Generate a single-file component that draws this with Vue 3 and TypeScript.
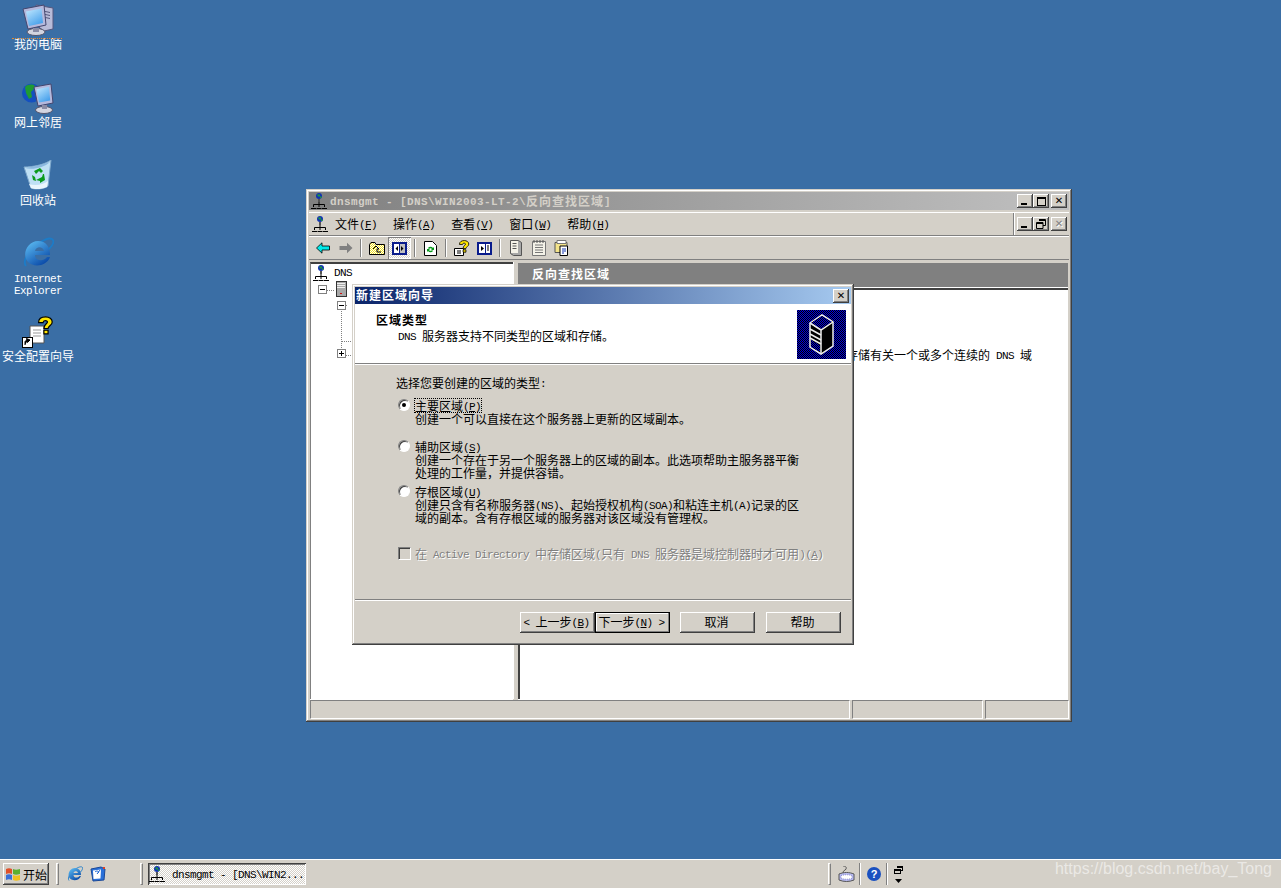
<template>
  <div class="screen">
    <svg class="defs" width="0" height="0" aria-hidden="true">
      <symbol id="mmc" viewBox="0 0 16 16">
        <circle cx="8" cy="3" r="3" fill="#1034b0" />
        <path d="M6 1.500h3v2H7zM9 3.500h1.500V5H9z" fill="#1e9a3c" />
        <path d="M7 6h2v3H7z" fill="#555" />
        <path d="M8 9v2M2.500 14v-2.500h11V14M8 11.500V14" fill="none" stroke="#000" />
        <path d="M0 15.500h5M5.500 15.500h5M11 15.500h5" stroke="#000" />
      </symbol>
      <symbol id="ie" viewBox="0 0 32 32">
        <defs>
          <linearGradient id="ieg" x1="0" y1="0" x2="0.7" y2="1">
            <stop offset="0" stop-color="#62c4f8" />
            <stop offset="1" stop-color="#0a4aa8" />
          </linearGradient>
        </defs>
        <path d="M4 29C0 24 7 12 17 6c6-4 12-6 14-3 1 2-1 6-4 9" fill="none" stroke="#1c7cc8" stroke-width="1.800" />
        <path d="M16 4c8 0 12 6 12 14H13c0 6 8 7 12 2h3c-3 9-16 11-22 5C-1 17 6 4 16 4zm-3 10h9c-1-5-8-5-9 0z" fill="url(#ieg)" fill-rule="evenodd" />
      </symbol>
      <symbol id="qmark" viewBox="0 0 16 16">
        <path d="M3 5.500C3 2 6 .7 9 .7s5.500 1.800 5.500 4.300c0 3-3.500 3.300-3.500 5.500H7.500C7.500 7 10.500 6.500 10.500 5 10.500 3.600 7 3.200 6.800 5.500z" fill="#ffe600" stroke="#000" stroke-width="1" />
        <path d="M7.500 12h3.500v3H7.500z" fill="#ffe600" stroke="#000" stroke-width="1" />
      </symbol>
      <linearGradient id="scr" x1="0" y1="0" x2="0.6" y2="1">
        <stop offset="0" stop-color="#c4eaff" />
        <stop offset="1" stop-color="#4aa2ec" />
      </linearGradient>
      <pattern id="ydith" width="2" height="2" patternUnits="userSpaceOnUse">
        <rect width="2" height="2" fill="#fff" />
        <rect width="1" height="1" fill="#f0e020" />
        <rect x="1" y="1" width="1" height="1" fill="#f0e020" />
      </pattern>
    </svg>

    <main class="desktop">
      <div
        v-for="item in desktopIcons"
        :key="item.id"
        class="desk-icon"
        :style="{ top: item.top + 'px' }"
      >
        <svg v-if="item.id === 'pc'" class="desk-svg" viewBox="0 0 32 32">
          <path d="M14 1 31 4v21l-9 2-8-6z" fill="#b8bbd8" stroke="#55577e" />
          <path d="M21 7l7 1.500M21 10l7 1.500M21 13l7 1.500" stroke="#55577e" />
          <ellipse cx="14" cy="28" rx="9" ry="3.500" fill="#d4d5e0" stroke="#55566c" />
          <path d="M1 5 22 1l2 20-18 4z" fill="#b4b8dc" stroke="#44466e" />
          <path d="M4 7.500 19.500 4.500l1.500 14.500L7 22z" fill="url(#scr)" />
          <path d="M11 24h6v4h-6z" fill="#8a8ca6" />
        </svg>
        <svg v-else-if="item.id === 'net'" class="desk-svg" viewBox="0 0 32 32">
          <circle cx="9.500" cy="11" r="9.500" fill="#1450c0" />
          <path d="M3 5c3-3 8-3 10-1l-2 4-2 2 1 5-3 2-3-6z" fill="#1f9a34" />
          <path d="M12 5 29 2l2 19-15 3z" fill="#b4b8dc" stroke="#44466e" />
          <path d="M14.500 7.200 27 4.800l1.200 13.700L17 20.500z" fill="url(#scr)" />
          <ellipse cx="22" cy="28" rx="8.500" ry="3.500" fill="#d4d5e0" stroke="#55566c" />
          <path d="M20 23h5v4h-5z" fill="#8a8ca6" />
        </svg>
        <svg v-else-if="item.id === 'bin'" class="desk-svg" viewBox="0 0 32 32">
          <path d="M2 7C10 7 22 5 29 0l-3 26c-3 3-13 4-17 2z" fill="#bfe0f5" stroke="#7ea8cc" />
          <path d="M3 8c7 2 19 0 25-6-7 2-17 5-25 6z" fill="#8ab8df" />
          <path d="M7 24c6 2 14 1 19-3l-1 6c-4 2-12 3-16 1z" fill="#eaf6fd" />
          <path d="M12 11l6-3 3 3-2 2-2-2-3 3zM22 14l1 6-5 3v-2l-4-1 6-3 1-3zM10 15l3 2 1 4-3-1z" fill="#0a9a1c" />
        </svg>
        <svg v-else-if="item.id === 'ie'" class="desk-svg"><use href="#ie" /></svg>
        <svg v-else class="desk-svg" viewBox="0 0 32 32">
          <path d="M8 10h14v17H8z" fill="#fff" stroke="#555" />
          <path d="M11 14h8M11 17h8M11 20h8" stroke="#999" />
          <use href="#qmark" x="13" y="0" width="19" height="19" />
          <path d="M0 21h11v11H0z" fill="#000" />
          <path d="M1 22h9v9H1z" fill="#fff" />
          <path d="M3 29v-3c0-1 1-2 3-2M4.500 22.500 8 24l-2.500 2.500z" fill="#000" stroke="#000" />
        </svg>
        <div class="desk-label" :class="{ 'latin-label': item.latin }">
          <span v-for="line in item.lines" :key="line" :class="{ l: item.latin }">{{ line }}</span>
        </div>
      </div>
      <div class="drag-mark"></div>

      <section class="win">
        <header class="titlebar">
          <svg class="ico16"><use href="#mmc" /></svg>
          <span class="title-text bold"><span class="l">dnsmgmt - [DNS\WIN2003-LT-2\</span>反向查找区域<span class="l">]</span></span>
          <div class="caption-btns">
            <button class="cap"><span class="glyph-min"></span></button>
            <button class="cap"><span class="glyph-max"></span></button>
            <button class="cap close"><span class="glyph-x">✕</span></button>
          </div>
        </header>

        <nav class="menubar">
          <svg class="ico16 menu-ico"><use href="#mmc" /></svg>
          <span v-for="m in menus" :key="m.key" class="menu-item">{{ m.label }}<span class="l">(<u>{{ m.key }}</u>)</span></span>
          <div class="mdi-btns">
            <button class="cap"><span class="glyph-min"></span></button>
            <button class="cap">
              <svg width="10" height="10" viewBox="0 0 10 10"><path d="M3 .5h6.500v6H7M.5 3.500H7v6H.5zM3 1.500h6.500M.5 4.500H7" fill="none" stroke="#000" /></svg>
            </button>
            <button class="cap close disabled"><span class="glyph-x">✕</span></button>
          </div>
        </nav>

        <div class="toolbar">
          <span class="tool">
            <svg width="14" height="12" viewBox="0 0 14 12"><path d="M.5 6 6 .8V4h7.500v4H6v3.200z" fill="#00e8e8" stroke="#000" stroke-width=".8" /></svg>
          </span>
          <span class="tool">
            <svg width="14" height="12" viewBox="0 0 14 12"><path d="M13.500 6 8 .8V4H.5v4H8v3.200z" fill="#808080" /></svg>
          </span>
          <span class="tsep"></span>
          <span class="tool">
            <svg width="16" height="14" viewBox="0 0 16 14"><path d="M.5 3.500 2 1.500h4l1 2h8.500v10H.5z" fill="url(#ydith)" stroke="#000" /><path d="M4 8l3-3 3 3H8v3h4" fill="none" stroke="#000" /></svg>
          </span>
          <span class="tool pressed">
            <svg width="15" height="13" viewBox="0 0 15 13"><path d="M0 0h15v13H0z" fill="#0a1c8c" /><path d="M2 2h5v9H2z" fill="#fff" /><path d="M8 2h5v9H8z" fill="#c0c0c0" /><path d="M6 4v5L3.500 6.500zM9 4v5l2.500-2.500z" fill="#000" /></svg>
          </span>
          <span class="tsep"></span>
          <span class="tool">
            <svg width="13" height="15" viewBox="0 0 13 15"><path d="M.5.500h8l4 4v10H.5z" fill="#fff" stroke="#000" /><path d="M4 7a3 3 0 0 1 5 0l1-1v3H7l1-1a2 2 0 0 0-3 0zM9 10a3 3 0 0 1-5 0l-1 1V8h3l-1 1a2 2 0 0 0 3 0z" fill="#0a9a1c" /></svg>
          </span>
          <span class="tsep"></span>
          <span class="tool">
            <svg width="16" height="16" viewBox="0 0 16 16"><path d="M.5 8.500h9v7h-9z" fill="#fff" stroke="#000" /><path d="M3 11h4M3 13h4" stroke="#000" /><use href="#qmark" x="3" y="0" width="13" height="13" /></svg>
          </span>
          <span class="tool">
            <svg width="15" height="13" viewBox="0 0 15 13"><path d="M0 0h15v13H0z" fill="#0a1c8c" /><path d="M2 2h6v9H2z" fill="#fff" /><path d="M9 2h4v9H9z" fill="#fff" /><path d="M4 4v5l3-2.500z" fill="#000" /><path d="M10 4h2M10 6h2M10 8h2" stroke="#000" /></svg>
          </span>
          <span class="tsep"></span>
          <span class="tool">
            <svg width="12" height="16" viewBox="0 0 12 16"><path d="M.5.500h8l3 2v13h-8l-3-2z" fill="#a8a8a8" stroke="#555" /><path d="M1 1h7v12H1z" fill="#f4f2e8" /><path d="M2.500 3.500h4M2.500 6h4M2.500 8.500h4" stroke="#555" /></svg>
          </span>
          <span class="tool">
            <svg width="14" height="16" viewBox="0 0 14 16"><path d="M.5 1.500h13v14H.5z" fill="#f4f2e8" stroke="#777" /><path d="M3 5h8M3 7.500h8M3 10h8M3 12.500h8" stroke="#777" /><path d="M2 0v3M5 0v3M8 0v3M11 0v3" stroke="#555" /></svg>
          </span>
          <span class="tool">
            <svg width="16" height="16" viewBox="0 0 16 16"><path d="M1 2.500h12v10H1z" fill="#f4e48a" stroke="#555" /><path d="M3 .5h9v3H3z" fill="#fff" stroke="#777" /><path d="M6 6h7.500v9.500H6z" fill="#fff" stroke="#000" /><path d="M8 9h4M8 11h4M8 13h2" stroke="#1034b0" /></svg>
          </span>
        </div>

        <div class="panes">
          <aside class="tree">
            <div class="tree-root">
              <svg class="ico16"><use href="#mmc" /></svg>
              <span class="l">DNS</span>
            </div>
            <svg class="tree-lines" width="60" height="90" viewBox="0 0 60 90" shape-rendering="crispEdges">
              <path d="M12 9h12M30 22v51M31 60h10M31 24h5M35 74h6" fill="none" stroke="#808080" stroke-dasharray="1 1" />
              <path d="M7.500 4.500h8v8h-8zM26.500 20.500h8v8h-8zM26.500 68.500h8v8h-8z" fill="#fff" stroke="#808080" />
              <path d="M9 8.500h5M28 24.500h5M28 72.500h5M30.500 70v5" stroke="#000" />
              <path d="M25 0h10v15H25z" fill="#a8a8a8" stroke="#333" />
              <path d="M26 2h8M26 4h8M26 6h8" stroke="#eee" />
              <path d="M29 12h2v1h-2z" fill="#d01010" />
            </svg>
          </aside>
          <div class="splitter"></div>
          <div class="detail">
            <div class="detail-head bold">反向查找区域</div>
            <div class="detail-body">
              <p class="detail-text">存储有关一个或多个连续的<span class="l"> DNS </span>域</p>
            </div>
          </div>
        </div>

        <footer class="statusbar">
          <span class="st st-a"></span>
          <span class="st st-b"></span>
          <span class="st st-c"></span>
        </footer>
      </section>

      <section class="wizard">
        <header class="wiz-title bold">
          <span class="wiz-name">新建区域向导</span>
          <button class="cap close"><span class="glyph-x">✕</span></button>
        </header>
        <div class="wiz-head">
          <div>
            <h1 class="wiz-h1 bold">区域类型</h1>
            <p class="wiz-sub"><span class="l">DNS </span>服务器支持不同类型的区域和存储。</p>
          </div>
          <svg class="wiz-art" width="49" height="49" viewBox="0 0 49 49">
            <defs>
              <pattern id="dith" width="2" height="2" patternUnits="userSpaceOnUse">
                <rect width="2" height="2" fill="#000" />
                <rect width="1" height="1" fill="#0000e0" />
                <rect x="1" y="1" width="1" height="1" fill="#0000e0" />
              </pattern>
            </defs>
            <rect width="49" height="49" fill="url(#dith)" />
            <path d="M13 13 25 5l11 7v24l-12 8-11-7z" fill="#000" stroke="#eee" stroke-width="1.500" />
            <path d="M14 13l11-7 10 6-11 7z" fill="url(#dith)" />
            <path d="M13 13l11 7 12-8M24 20v24" fill="none" stroke="#eee" stroke-width="1.500" />
            <path d="M13 19l11 6M13 24l11 6M13 28l11 6" stroke="#eee" stroke-width="1.500" />
            <path d="M14 30l9 5v7l-9-5z" fill="url(#dith)" />
          </svg>
        </div>
        <div class="rule"></div>

        <div class="wiz-body">
          <p class="prompt">选择您要创建的区域的类型<span class="l">:</span></p>

          <div class="option first">
            <span class="radio checked"></span>
            <div>
              <div class="opt-label focus">主要区域<span class="l">(<u>P</u>)</span></div>
              <div>创建一个可以直接在这个服务器上更新的区域副本。</div>
            </div>
          </div>

          <div class="option second">
            <span class="radio"></span>
            <div>
              <div class="opt-label">辅助区域<span class="l">(<u>S</u>)</span></div>
              <div>创建一个存在于另一个服务器上的区域的副本。此选项帮助主服务器平衡</div>
              <div>处理的工作量，并提供容错。</div>
            </div>
          </div>

          <div class="option third">
            <span class="radio"></span>
            <div>
              <div class="opt-label">存根区域<span class="l">(<u>U</u>)</span></div>
              <div>创建只含有名称服务器<span class="l">(NS)</span>、起始授权机构<span class="l">(SOA)</span>和粘连主机<span class="l">(A)</span>记录的区</div>
              <div>域的副本。含有存根区域的服务器对该区域没有管理权。</div>
            </div>
          </div>

          <div class="check-row">
            <span class="checkbox"></span>
            <span class="disabled-text">在<span class="l"> Active Directory </span>中存储区域<span class="l">(</span>只有<span class="l"> DNS </span>服务器是域控制器时才可用<span class="l">)(<u>A</u>)</span></span>
          </div>
        </div>

        <div class="rule"></div>
        <div class="wiz-actions">
          <button class="btn"><span class="l">&lt; </span>上一步<span class="l">(<u>B</u>)</span></button>
          <button class="btn default">下一步<span class="l">(<u>N</u>) &gt;</span></button>
          <button class="btn gap">取消</button>
          <button class="btn gap last">帮助</button>
        </div>
      </section>
    </main>

    <footer class="taskbar">
      <button class="start">
        <svg width="16" height="15" viewBox="0 0 16 15">
          <path d="M1 2c2-1 4-1 6 0v5c-2-1-4-1-6 0z" fill="#e0502a" />
          <path d="M8 2c2 1 4 1 7 0v5c-3 1-5 1-7 0z" fill="#5cb030" />
          <path d="M1 8c2-1 4-1 6 0v5c-2-1-4-1-6 0z" fill="#3a70d8" />
          <path d="M8 8c2 1 4 1 7 0v5c-3 1-5 1-7 0z" fill="#f0c020" />
        </svg>
        <span>开始</span>
      </button>
      <span class="handle first-handle"></span>
      <svg class="ql" width="16" height="16"><use href="#ie" /></svg>
      <svg class="ql second-ql" width="16" height="16" viewBox="0 0 16 16">
        <path d="M1 3 11 1l4 2-1 11-11 1z" fill="#2a70d8" stroke="#1a4898" />
        <path d="M3 4.500l8-1-.5 9-7 .5z" fill="#fff" />
        <path d="M5 6a2.500 2.500 0 0 1 4 0l-2 2M7 8l3-4" fill="none" stroke="#2a70d8" />
        <path d="M13 1h2v2h-2z" fill="#e04020" />
      </svg>
      <span class="handle task-handle"></span>
      <button class="task">
        <svg class="ico16"><use href="#mmc" /></svg>
        <span class="l task-text">dnsmgmt - [DNS\WIN2...</span>
      </button>
      <div class="spacer"></div>
      <span class="handle"></span>
      <svg class="tray-kb" width="17" height="16" viewBox="0 0 17 16">
        <path d="M5 7c0-3 2-2 3-4s-1-3-3-3" fill="none" stroke="#555" />
        <path d="M1 8c5-2 10-2 15 0v6c-5 2-10 2-15 0z" fill="#b8bbf0" stroke="#555" />
        <path d="M3 9.500c4-1 7-1 11 0v3c-4 1-7 1-11 0z" fill="#fff" stroke="#8a8ad0" stroke-dasharray="1 1" />
      </svg>
      <span class="thin"></span>
      <span class="tray-help">?</span>
      <span class="thin second-thin"></span>
      <div class="tray-arrows">
        <svg width="9" height="8" viewBox="0 0 9 8" shape-rendering="crispEdges"><path d="M3 .5h5.500v4H6M.5 3.500H6v4H.5zM3 1.500h5.500M.5 4.500H6" fill="none" stroke="#000" /></svg>
        <svg width="7" height="4" viewBox="0 0 7 4"><path d="M0 0h7L3.500 4z" fill="#000" /></svg>
      </div>
    </footer>
    <div class="watermark">https://blog.csdn.net/bay_Tong</div>
  </div>
</template>

<script setup lang="ts">
interface DesktopIcon {
  id: string
  top: number
  lines: string[]
  latin?: boolean
}

const desktopIcons: DesktopIcon[] = [
  { id: 'pc', top: 4, lines: ['我的电脑'] },
  { id: 'net', top: 82, lines: ['网上邻居'] },
  { id: 'bin', top: 160, lines: ['回收站'] },
  { id: 'ie', top: 237, lines: ['Internet', 'Explorer'], latin: true },
  { id: 'wizard', top: 316, lines: ['安全配置向导'] }
]

const menus = [
  { label: '文件', key: 'F' },
  { label: '操作', key: 'A' },
  { label: '查看', key: 'V' },
  { label: '窗口', key: 'W' },
  { label: '帮助', key: 'H' }
]
</script>

<style>
html,
body {
  margin: 0;
  background: #3a6ea5;
}
</style>

<style scoped>
.screen {
  position: relative;
  width: 1281px;
  height: 888px;
  overflow: hidden;
  display: flex;
  flex-direction: column;
  background: #3a6ea5;
  color: #000;
  font: 12px/13px "Noto Sans CJK SC", "Liberation Mono", monospace;
}

.defs {
  position: absolute;
}

/* latin text sits in half-width cells, 6px each, as in the old bitmap font */
.l {
  font-family: "Liberation Mono", monospace;
  font-size: 11px;
  letter-spacing: -0.6px;
  line-height: 0;
  vertical-align: 1px;
}

.bold {
  font-weight: 700;
  letter-spacing: 1px;
}

.bold .l {
  letter-spacing: 0.4px;
}

p,
h1 {
  margin: 0;
  font-size: 12px;
}

button {
  font: inherit;
  color: #000;
  padding: 0;
  border: 0;
  background: #d4d0c8;
}

.desktop {
  position: relative;
  flex: 1;
}

.desk-icon {
  position: absolute;
  left: 0;
  width: 76px;
  display: flex;
  flex-direction: column;
  align-items: center;
  color: #fff;
}

.desk-svg {
  width: 32px;
  height: 32px;
}

.desk-label {
  margin-top: 2px;
  text-align: center;
  line-height: 12px;
}

.desk-label span {
  display: block;
  line-height: 12px;
}

.latin-label {
  margin-top: 4px;
}

.drag-mark {
  position: absolute;
  left: 12px;
  top: 38px;
  width: 50px;
  border-top: 1px dotted #e08a30;
}

/* raised 3d edge shared by window and dialog */
.win,
.wizard {
  position: absolute;
  box-sizing: border-box;
  background: #d4d0c8;
  padding: 3px;
  display: flex;
  flex-direction: column;
  box-shadow: inset -1px -1px #404040, inset 1px 1px #d4d0c8, inset -2px -2px #808080, inset 2px 2px #fff;
}

.win {
  left: 306px;
  top: 189px;
  width: 766px;
  height: 533px;
}

.titlebar {
  height: 18px;
  display: flex;
  align-items: center;
  gap: 3px;
  padding-left: 2px;
  margin-bottom: 2px;
  background: linear-gradient(90deg, #808080, #c0c0c0);
  color: #d4d0c8;
}

.ico16 {
  width: 16px;
  height: 16px;
  flex: none;
}

.title-text {
  white-space: nowrap;
  margin-top: -2px;
}

.caption-btns {
  margin-left: auto;
  margin-right: 2px;
  display: flex;
}

.mdi-btns {
  margin-left: auto;
  width: 56px;
  height: 22px;
  box-sizing: border-box;
  border-left: 1px solid #808080;
  box-shadow: inset 1px 0 #fff;
  padding-left: 3px;
  display: flex;
  align-items: center;
}

.cap {
  width: 16px;
  height: 14px;
  flex: none;
  display: flex;
  align-items: center;
  justify-content: center;
  position: relative;
  box-shadow: inset -1px -1px #404040, inset 1px 1px #fff, inset -2px -2px #808080;
}

.cap.close {
  margin-left: 2px;
}

.glyph-min {
  width: 6px;
  height: 2px;
  background: #000;
  margin: 6px 3px 0 0;
}

.glyph-max {
  width: 7px;
  height: 6px;
  border: 1px solid #000;
  border-top-width: 2px;
}

.glyph-x {
  font: 700 10px/10px "DejaVu Sans", sans-serif;
  letter-spacing: 0;
}

.disabled .glyph-x {
  color: #808080;
  text-shadow: 1px 1px #fff;
}

.menubar {
  height: 24px;
  box-sizing: border-box;
  display: flex;
  align-items: center;
  border-top: 1px solid #fff;
  border-bottom: 1px solid #808080;
  box-shadow: 0 1px #fff;
  padding-left: 3px;
  margin-bottom: 1px;
}

.menu-ico {
  margin-right: -1px;
}

.menu-item {
  padding: 0 8px;
  white-space: nowrap;
  margin-top: -2px;
}

.toolbar {
  height: 22px;
  display: flex;
  align-items: center;
  padding-left: 2px;
  border-bottom: 1px solid #808080;
  margin-bottom: 2px;
}

.tool {
  width: 23px;
  height: 22px;
  display: flex;
  align-items: center;
  justify-content: center;
  box-sizing: border-box;
}

.tool.pressed {
  background: repeating-conic-gradient(#fff 0 25%, #d4d0c8 0 50%) 0 0 / 2px 2px;
  box-shadow: inset 1px 1px #808080, inset -1px -1px #fff;
}

.tsep {
  width: 8px;
  height: 20px;
  position: relative;
}

.tsep::before {
  content: "";
  position: absolute;
  left: 3px;
  top: 1px;
  bottom: 1px;
  width: 1px;
  background: #808080;
  box-shadow: 1px 0 #fff;
}

.panes {
  flex: 1;
  min-height: 0;
  display: flex;
  padding: 0 1px;
}

.tree {
  width: 203px;
  box-sizing: border-box;
  background: #fff;
  border-top: 2px solid #404040;
  border-left: 1px solid #808080;
  box-shadow: 1px 0 #fff, 0 1px #fff;
}

.tree-root {
  display: flex;
  align-items: center;
  gap: 5px;
  padding: 1px 0 0 2px;
  height: 16px;
}

.tree-lines {
  display: block;
}

.splitter {
  width: 5px;
}

.detail {
  flex: 1;
  display: flex;
  flex-direction: column;
  min-width: 0;
}

.detail-head {
  height: 24px;
  line-height: 21px;
  padding-left: 14px;
  margin-top: 1px;
  background: #808080;
  color: #fff;
  border-bottom: 1px solid #fff;
}

.detail-body {
  flex: 1;
  background: #fff;
  border-top: 2px solid #404040;
  border-left: 2px solid #404040;
  box-shadow: 0 1px #fff;
}

.detail-text {
  padding: 58px 0 0 326px;
  white-space: nowrap;
}

.statusbar {
  height: 19px;
  margin-top: 1px;
  display: flex;
  gap: 2px;
  padding-left: 1px;
}

.st {
  box-sizing: border-box;
  border-top: 1px solid #808080;
  border-left: 1px solid #808080;
  border-bottom: 1px solid #fff;
  border-right: 1px solid #fff;
}

.st-a {
  width: 540px;
}

.st-b {
  width: 131px;
}

.st-c {
  width: 84px;
}

.wizard {
  left: 352px;
  top: 284px;
  width: 502px;
  height: 361px;
}

.wiz-title {
  height: 17px;
  flex: none;
  display: flex;
  align-items: center;
  justify-content: space-between;
  padding: 0 2px 0 1px;
  color: #fff;
  background: linear-gradient(90deg, #0a246a, #a6caf0);
}

.wiz-name {
  margin-top: -2px;
}

.wiz-title .cap.close {
  margin: 0;
}

.wiz-head {
  height: 59px;
  flex: none;
  box-sizing: border-box;
  background: #fff;
  display: flex;
  justify-content: space-between;
  padding: 6px 5px 0 21px;
}

.wiz-h1 {
  margin-top: 3px;
}

.wiz-sub {
  margin: 3px 0 0 22px;
}

.wiz-art {
  flex: none;
}

.rule {
  height: 1px;
  flex: none;
  background: #808080;
  border-bottom: 1px solid #fff;
}

.wiz-body {
  flex: none;
  height: 234px;
  box-sizing: border-box;
  padding: 11px 0 0 41px;
}

.option {
  display: flex;
  align-items: flex-start;
  padding-left: 3px;
  gap: 4px;
}

.first {
  margin-top: 10px;
}

.second {
  margin-top: 15px;
}

.third {
  margin-top: 6px;
}

.opt-label {
  white-space: nowrap;
  width: fit-content;
}

.focus {
  outline: 1px dotted #000;
  outline-offset: 0;
}

.radio {
  width: 12px;
  height: 12px;
  flex: none;
  box-sizing: border-box;
  border-radius: 50%;
  background: #fff;
  border: 1px solid;
  border-color: #808080 #fff #fff #808080;
  box-shadow: inset 1px 1px #404040, 1px 1px 0 #d4d0c8;
  position: relative;
  left: -1px;
}

.radio.checked::after {
  content: "";
  position: absolute;
  left: 3px;
  top: 3px;
  width: 4px;
  height: 4px;
  border-radius: 50%;
  background: #000;
}

.check-row {
  display: flex;
  align-items: center;
  gap: 4px;
  margin-top: 23px;
  padding-left: 2px;
}

.checkbox {
  width: 13px;
  height: 13px;
  flex: none;
  box-sizing: border-box;
  background: #d4d0c8;
  border: 1px solid;
  border-color: #808080 #fff #fff #808080;
  box-shadow: inset 1px 1px #404040;
}

.disabled-text {
  color: #808080;
  text-shadow: 1px 1px #fff;
  white-space: nowrap;
}

.wiz-actions {
  display: flex;
  padding: 11px 0 0 165px;
}

.btn {
  width: 75px;
  height: 21px;
  flex: none;
  padding: 0 2px 2px 0;
  white-space: nowrap;
  box-shadow: inset -1px -1px #404040, inset 1px 1px #fff, inset -2px -2px #808080;
}

.btn.default {
  box-shadow: inset 0 0 0 1px #000, inset -2px -2px #808080, inset 2px 2px #fff;
}

.btn.gap {
  margin-left: 10px;
}

.btn.last {
  margin-left: 11px;
}

.taskbar {
  height: 29px;
  flex: none;
  box-sizing: border-box;
  display: flex;
  align-items: center;
  padding: 1px 0 0 3px;
  background: #d4d0c8;
  box-shadow: inset 0 1px #fff;
}

.start {
  width: 46px;
  height: 22px;
  display: flex;
  align-items: center;
  justify-content: center;
  gap: 2px;
  box-shadow: inset -1px -1px #404040, inset 1px 1px #fff, inset -2px -2px #808080;
}

.handle {
  width: 3px;
  height: 22px;
  box-sizing: border-box;
  border: 1px solid;
  border-color: #fff #808080 #808080 #fff;
  flex: none;
}

.first-handle {
  margin: 0 7px 0 7px;
}

.ql {
  flex: none;
  margin-left: 1px;
}

.second-ql {
  margin-left: 7px;
}

.task-handle {
  margin: 0 5px 0 34px;
}

.task {
  width: 158px;
  height: 22px;
  display: flex;
  align-items: center;
  gap: 7px;
  padding-left: 1px;
  box-sizing: border-box;
  background: repeating-conic-gradient(#fff 0 25%, #d4d0c8 0 50%) 0 0 / 2px 2px;
  box-shadow: inset 1px 1px #404040, inset -1px -1px #fff, inset 2px 2px #808080;
}

.task-text {
  white-space: nowrap;
  line-height: 13px;
  margin-top: 3px;
}

.spacer {
  flex: 1;
}

.tray-kb {
  margin-left: 7px;
  flex: none;
}

.thin {
  width: 1px;
  height: 22px;
  background: #808080;
  box-shadow: 1px 0 #fff;
  margin: 0 7px 0 4px;
}

.tray-help {
  width: 14px;
  height: 14px;
  border-radius: 50%;
  background: #1a50c0;
  color: #fff;
  font: 700 11px/14px "Liberation Sans", sans-serif;
  text-align: center;
  flex: none;
}

.second-thin {
  margin-left: 5px;
}

.tray-arrows {
  display: flex;
  flex-direction: column;
  align-items: center;
  gap: 5px;
  margin-right: 378px;
}

.watermark {
  position: absolute;
  right: 9px;
  bottom: 9px;
  font: 16px/20px "Liberation Sans", sans-serif;
  color: rgba(255, 255, 255, 0.55);
  white-space: nowrap;
}
</style>
